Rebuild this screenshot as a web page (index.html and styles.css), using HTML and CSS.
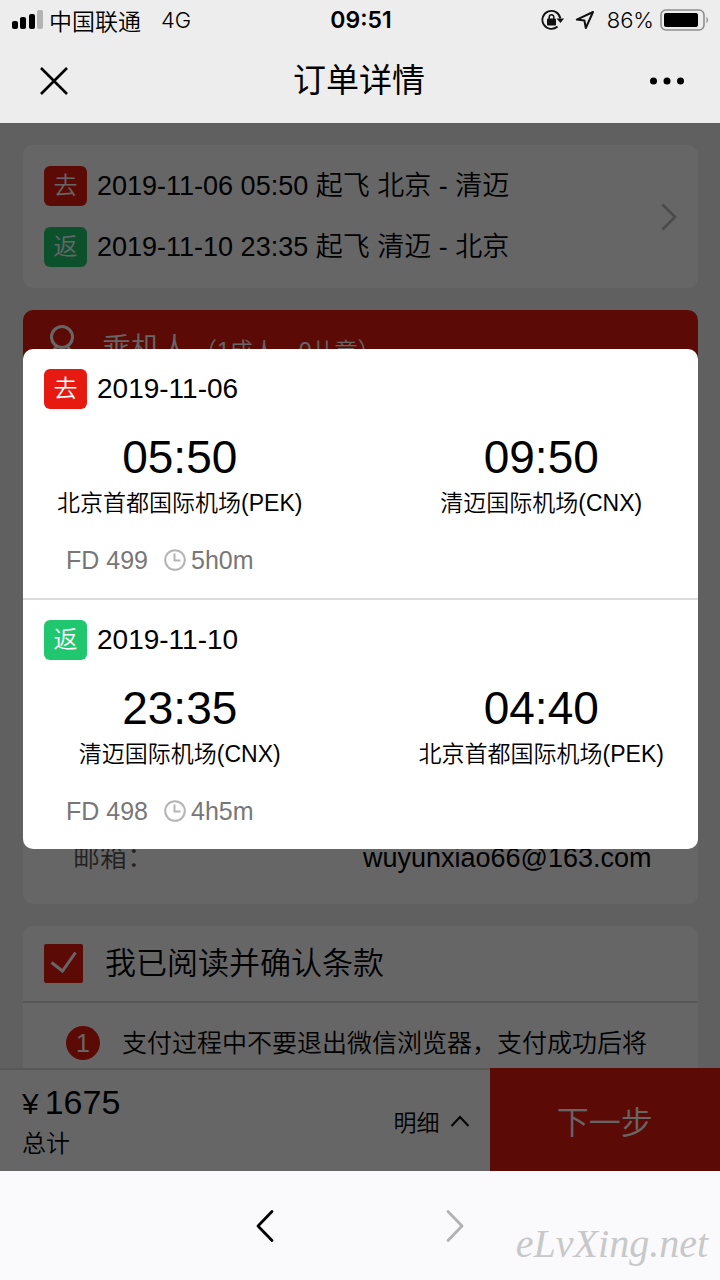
FILE: index.html
```html
<!DOCTYPE html>
<html lang="zh-CN">
<head>
<meta charset="utf-8">
<meta name="viewport" content="width=device-width, initial-scale=1">
<title>订单详情</title>
<link rel="stylesheet" href="styles.css">
</head>
<body>
<header class="top">
  <div class="status">
    <div class="status-left">
      <svg class="signal" width="31" height="20" viewBox="0 0 31 20" aria-hidden="true">
        <rect x="0" y="11" width="6" height="8" rx="2"/>
        <rect x="8" y="7" width="6" height="12" rx="2"/>
        <rect x="17" y="4" width="6" height="15" rx="2"/>
        <rect x="25" y="0" width="6" height="19" rx="2" fill="#b3b3b3"/>
      </svg>
      <span class="carrier">中国联通</span>
      <span>4G</span>
    </div>
    <div class="clock">09:51</div>
    <div class="status-right">
      <svg width="24" height="22" viewBox="0 0 24 22" fill="none" stroke="#111" stroke-width="1.8" aria-hidden="true">
        <path d="M16.500 17.500A9 9 0 1 1 19.300 9.500"/>
        <path d="M15.500 9.500h7.500l-3.500 4.500z" fill="#111" stroke="none"/>
        <rect x="6" y="9.500" width="9" height="7" rx="1" fill="#111" stroke="none"/>
        <path d="M8.200 10.500V8a2.300 2.300 0 0 1 4.600 0v2.500" stroke-width="1.500"/>
      </svg>
      <svg class="locate" width="20" height="20" viewBox="0 0 20 20" fill="none" stroke="#111" stroke-width="2" stroke-linejoin="round" aria-hidden="true">
        <path d="M18 2L1.800 9.600l7.600 .9L10.800 18z"/>
      </svg>
      <span class="percent">86%</span>
      <svg width="50" height="22" viewBox="0 0 50 22" aria-hidden="true">
        <rect x="1" y="1" width="43" height="20" rx="5" fill="none" stroke="#8e8e8e" stroke-width="1.600"/>
        <rect x="4" y="4" width="34" height="14" rx="2" fill="#000"/>
        <path d="M46.500 7.500q3 3.500 0 7z" fill="#8e8e8e"/>
      </svg>
    </div>
  </div>
  <nav class="title-bar">
    <button class="icon-button" type="button" aria-label="关闭">
      <svg width="28" height="28" viewBox="0 0 28 28" fill="none" stroke="#000" stroke-width="2.600"><path d="M1 1l26 26M27 1L1 27"/></svg>
    </button>
    <h1>订单详情</h1>
    <button class="icon-button" type="button" aria-label="更多">
      <svg width="34" height="8" viewBox="0 0 34 8"><circle cx="3.500" cy="4" r="3.500"/><circle cx="17" cy="4" r="3.500"/><circle cx="30.500" cy="4" r="3.500"/></svg>
    </button>
  </nav>
</header>

<div class="stage">
  <main class="order">
    <button class="card trip" type="button">
      <span class="trip-lines">
        <span class="leg"><span class="badge go">去</span>2019-11-06 05:50 起飞 北京 - 清迈</span>
        <span class="leg"><span class="badge back">返</span>2019-11-10 23:35 起飞 清迈 - 北京</span>
      </span>
      <svg width="16" height="28" viewBox="0 0 16 28" fill="none" stroke="#b8b8b8" stroke-width="2.600" aria-hidden="true"><path d="M1.500 1.500L14 14 1.500 26.500"/></svg>
    </button>

    <section class="card passengers">
      <h2 class="passengers-head">
        <svg width="26" height="42" viewBox="0 0 26 42" fill="none" stroke="#fff" stroke-width="3" aria-hidden="true"><circle cx="13" cy="12" r="10.500"/><path d="M8 21C4 25 2 31 2 40h22c0-9-2-15-6-19"/></svg>
        <span class="passengers-name">乘机人<small>（1成人，0儿童）</small></span>
      </h2>
      <dl class="contact">
        <dt>邮箱：</dt>
        <dd>wuyunxiao66@163.com</dd>
      </dl>
    </section>

    <section class="card terms">
      <label class="agree"><input type="checkbox" checked>我已阅读并确认条款</label>
      <div class="term"><span class="number">1</span><p>支付过程中不要退出微信浏览器，支付成功后将</p></div>
    </section>
  </main>

  <footer class="pay">
    <div class="total">
      <strong><span class="yen">¥</span>1675</strong>
      <span>总计</span>
    </div>
    <button class="detail" type="button">明细
      <svg width="20" height="14" viewBox="0 0 20 14" fill="none" stroke="#111" stroke-width="2.200" aria-hidden="true"><path d="M1.500 12L10 3l8.500 9"/></svg>
    </button>
    <button class="next" type="button">下一步</button>
  </footer>

  <div class="overlay">
    <div class="dialog" role="dialog" aria-label="航班信息">
      <section class="flight">
        <div class="leg"><span class="badge go">去</span>2019-11-06</div>
        <div class="ports">
          <div><b>05:50</b><span>北京首都国际机场(PEK)</span></div>
          <div><b>09:50</b><span>清迈国际机场(CNX)</span></div>
        </div>
        <div class="info">
          <span>FD 499</span>
          <span class="duration"><svg width="22" height="22" viewBox="0 0 22 22" fill="none" stroke="#b5b5b5" stroke-width="2" aria-hidden="true"><circle cx="11" cy="11" r="9.800"/><path d="M10.500 4.500V11.500H16.500"/></svg>5h0m</span>
        </div>
      </section>
      <section class="flight">
        <div class="leg"><span class="badge back">返</span>2019-11-10</div>
        <div class="ports">
          <div><b>23:35</b><span>清迈国际机场(CNX)</span></div>
          <div><b>04:40</b><span>北京首都国际机场(PEK)</span></div>
        </div>
        <div class="info">
          <span>FD 498</span>
          <span class="duration"><svg width="22" height="22" viewBox="0 0 22 22" fill="none" stroke="#b5b5b5" stroke-width="2" aria-hidden="true"><circle cx="11" cy="11" r="9.800"/><path d="M10.500 4.500V11.500H16.500"/></svg>4h5m</span>
        </div>
      </section>
    </div>
  </div>
</div>

<nav class="browser-bar">
  <button class="icon-button" type="button" aria-label="后退">
    <svg width="18" height="34" viewBox="0 0 18 34" fill="none" stroke="#000" stroke-width="2.800" stroke-linecap="round" stroke-linejoin="round"><path d="M16 2.500L2 17l14 14.500"/></svg>
  </button>
  <button class="icon-button" type="button" aria-label="前进" disabled>
    <svg width="18" height="34" viewBox="0 0 18 34" fill="none" stroke="#b2b2b4" stroke-width="2.800" stroke-linecap="round" stroke-linejoin="round"><path d="M2 2.500L16 17 2 31.500"/></svg>
  </button>
  <span class="watermark">eLvXing.net</span>
</nav>
</body>
</html>
```
FILE: styles.css
```css
* { box-sizing: border-box; }

body {
  margin: 0;
  height: 100vh;
  display: flex;
  flex-direction: column;
  font-family: "Liberation Sans", "Noto Sans CJK SC", sans-serif;
  font-weight: 350;
  color: #000;
}

button {
  border: 0;
  background: none;
  color: inherit;
  font: inherit;
  padding: 0;
}

svg { display: block; flex: none; }
h1, h2, p, dl, dd { margin: 0; font-weight: inherit; }

/* Status and title bars */
.top { background: #ededed; }
.status {
  display: grid;
  grid-template-columns: 1fr auto 1fr;
  align-items: center;
  height: 40px;
  padding: 0 10px 0 12px;
  font-family: Inter, "Noto Sans CJK SC", sans-serif;
  font-size: 22px;
}
.status-left, .status-right { display: flex; align-items: center; }
.status-left { gap: 20px; }
.signal { margin-right: -14px; }
.carrier { font-size: 23px; }
.clock { font-size: 23px; font-weight: 600; }
.status-right { justify-content: flex-end; }
.locate { margin: 0 12px 0 10px; }
.percent { margin-right: 6px; }
.title-bar {
  display: flex;
  align-items: center;
  justify-content: space-between;
  height: 83px;
  padding: 0 36px 2px 40px;
}
.title-bar h1 { font-size: 33px; font-weight: 400; line-height: 48px; }

/* Order page */
.stage {
  position: relative;
  flex: 1;
  min-height: 0;
  display: flex;
  flex-direction: column;
  background: #f0f0f0;
}
.order {
  flex: 1;
  min-height: 0;
  overflow: hidden;
  display: flex;
  flex-direction: column;
  gap: 22px;
  padding: 22px 22px 0 23px;
}
.card { flex: none; background: #fff; border-radius: 10px; }
.trip {
  display: flex;
  align-items: center;
  justify-content: space-between;
  padding: 21px;
  text-align: left;
}
.trip-lines { display: grid; gap: 21px; }
.leg {
  display: flex;
  align-items: center;
  gap: 10px;
  font-size: 27px;
  line-height: 40px;
}
.badge {
  width: 43px;
  border-radius: 6px;
  color: #fff;
  font-size: 24px;
  text-align: center;
}
.go { background: #e61a10; }
.back { background: #21c76e; }

.passengers { overflow: hidden; }
.passengers-head {
  display: flex;
  align-items: flex-start;
  gap: 27px;
  padding: 15px 26px 14px;
  background: #e61a0d;
  color: #fff;
}
.passengers-name { font-size: 29px; line-height: 48px; }
.passengers-name small { margin-left: 5px; font-size: 23px; }
.contact {
  display: grid;
  grid-template-columns: 290px 1fr;
  padding: 449px 50px 26px;
  font-size: 27px;
  line-height: 40px;
}
.contact dt { color: #555; }

.agree {
  display: flex;
  align-items: center;
  gap: 22px;
  padding: 15px 21px;
  border-bottom: 2px solid #dcdcdc;
  font-size: 31px;
  line-height: 45px;
}
.agree input {
  appearance: none;
  width: 39px;
  height: 39px;
  margin: 0;
  border-radius: 2px;
  background: #e61a10 url("data:image/svg+xml,%3Csvg xmlns='http://www.w3.org/2000/svg' viewBox='0 0 39 39' fill='none' stroke='white' stroke-width='3'%3E%3Cpath d='M7.500 18.500L18.500 27 31.500 8.500'/%3E%3C/svg%3E");
}
.term {
  display: flex;
  align-items: center;
  gap: 22px;
  padding: 20px 43px;
  font-size: 25px;
  line-height: 40px;
}
.term p { white-space: nowrap; }
.number {
  width: 34px;
  border-radius: 50%;
  background: #e61a10;
  color: #fff;
  line-height: 34px;
  text-align: center;
}

/* Payment bar */
.pay {
  display: flex;
  background: #fff;
}
.total {
  flex: 1;
  display: grid;
  align-content: end;
  padding: 0 22px 8px;
  border-top: 2px solid #dcdcdc;
  font-size: 24px;
  line-height: 38px;
}
.total strong { font-size: 34px; font-weight: inherit; line-height: 42px; }
.yen { margin-right: 6px; font-size: 30px; }
.detail {
  display: flex;
  align-items: center;
  gap: 10px;
  padding: 0 20px;
  border-top: 2px solid #dcdcdc;
  font-size: 23px;
}
.next {
  width: 32%;
  padding-top: 7px;
  background: #e61a0d;
  color: #fff;
  font-size: 32px;
  line-height: 96px;
}

/* Flight dialog */
.overlay {
  position: absolute;
  inset: 0;
  padding: 226px 22px 0 23px;
  background: rgba(0, 0, 0, 0.6);
}
.dialog { background: #fff; border-radius: 10px; }
.flight { padding: 20px 0 19px; }
.flight + .flight { border-top: 2px solid #dcdcdc; }
.flight .leg { padding: 0 21px; font-size: 28px; }
.ports {
  display: grid;
  grid-template-columns: 1fr 1fr;
  gap: 48px;
  padding-top: 20px;
  text-align: center;
}
.ports b {
  display: block;
  font-size: 46px;
  font-weight: inherit;
  line-height: 56px;
}
.ports span { display: block; font-size: 23px; line-height: 36px; }
.info {
  display: flex;
  gap: 16px;
  padding: 20px 43px 0;
  color: #777;
  font-size: 25px;
  line-height: 38px;
}
.duration { display: flex; align-items: center; gap: 5px; }

/* Browser navigation */
.browser-bar {
  position: relative;
  display: flex;
  align-items: center;
  justify-content: center;
  gap: 172px;
  height: 109px;
  background: #fafafc;
}
.watermark {
  position: absolute;
  right: 12px;
  bottom: 12px;
  color: #c8c8c8;
  font: italic 400 40px/48px "Liberation Serif", serif;
}
```
